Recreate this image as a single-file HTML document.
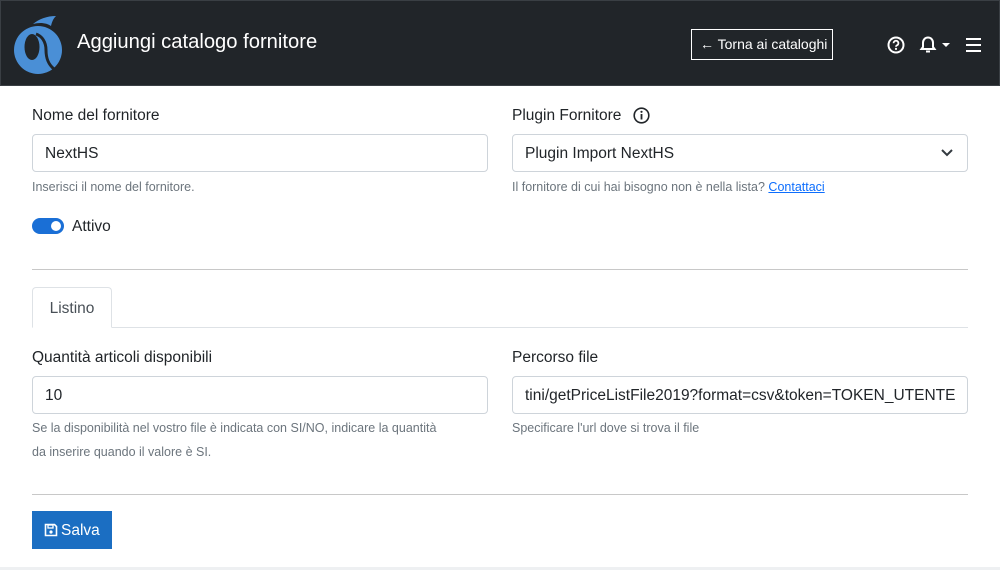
<!DOCTYPE html>
<html><head><meta charset="utf-8"><style>
*{box-sizing:border-box;margin:0;padding:0}
body{width:1000px;height:570px;background:#fff;font-family:"Liberation Sans",sans-serif;color:#212529;position:relative;overflow:hidden}
.hdr{position:absolute;left:0;top:0;width:1000px;height:86px;background:#212529;border:1px solid #3a3f44}
.title{position:absolute;left:76px;top:30px;color:#fff;font-size:20.2px}
.back{position:absolute;left:690px;top:28px;width:142px;height:31px;border:1px solid #fff;color:#fff;font-size:14px;line-height:29px;padding-left:8px}
.abs{position:absolute}
.lbl{position:absolute;font-size:15.5px}
.inp{position:absolute;height:38px;border:1px solid #ced4da;border-radius:4px;font-size:15.5px;line-height:38px;padding-left:12px;white-space:nowrap;overflow:hidden}
.help{position:absolute;font-size:12.5px;color:#6c757d;line-height:24px;white-space:nowrap}
.hr{position:absolute;left:32px;width:936px;height:1px;background:#c8c8c8}
</style></head><body>
<div class="hdr">
<svg class="abs" style="left:11px;top:11px" width="54" height="64" viewBox="0 0 54 64">
<circle cx="26" cy="38" r="24" fill="#4a8fd6"/>
<ellipse cx="20" cy="35" rx="7.5" ry="13" fill="#212529"/>
<path d="M24 22c6 2 10 8 10 16 0 8 2 14 8 19" fill="none" stroke="#212529" stroke-width="3"/>
<path d="M21 12c6-5 14-8 23-8-3 3-4 6-5 10-4-3-11-4-18-2z" fill="#4a8fd6"/>
</svg>
<div class="title">Aggiungi catalogo fornitore</div>
<div class="back">← Torna ai cataloghi</div>
<svg class="abs" style="left:886px;top:35px" width="18" height="18" viewBox="0 0 18 18"><circle cx="9" cy="9" r="7.5" fill="none" stroke="#fff" stroke-width="2"/><path d="M6.6 7.2a2.4 2.4 0 1 1 3.2 2.2c-.6.3-.8.7-.8 1.3" fill="none" stroke="#fff" stroke-width="1.8"/><circle cx="9" cy="12.9" r="1.1" fill="#fff"/></svg>
<svg class="abs" style="left:918px;top:34px" width="18" height="20" viewBox="0 0 18 20"><path d="M9 2.5c-3 0-5 2.3-5 5.3v4.2L2.5 14h13L14 12V7.8c0-3-2-5.3-5-5.3z" fill="none" stroke="#fff" stroke-width="2"/><path d="M7 16.5h4" stroke="#fff" stroke-width="2"/></svg>
<div class="abs" style="left:941px;top:42px;border-left:4px solid transparent;border-right:4px solid transparent;border-top:4px solid #fff"></div>
<div class="abs" style="left:965px;top:37px;width:15px;height:2px;background:#fff;box-shadow:0 6px 0 #fff,0 12px 0 #fff"></div>
</div>

<div class="lbl" style="left:32px;top:107px">Nome del fornitore</div>
<div class="inp" style="left:32px;top:134px;width:456px">NextHS</div>
<div class="help" style="left:32px;top:175px">Inserisci il nome del fornitore.</div>
<div class="abs" style="left:32px;top:218px;width:32px;height:16px;border-radius:8px;background:#1a6fd6"><div class="abs" style="left:19px;top:3px;width:10px;height:10px;border-radius:50%;background:#fff"></div></div>
<div class="lbl" style="left:72px;top:218px">Attivo</div>

<div class="lbl" style="left:512px;top:107px">Plugin Fornitore</div>
<svg class="abs" style="left:633px;top:107px" width="17" height="17" viewBox="0 0 17 17"><circle cx="8.5" cy="8.5" r="7.3" fill="none" stroke="#212529" stroke-width="1.6"/><rect x="7.6" y="7" width="1.8" height="5.5" fill="#212529"/><circle cx="8.5" cy="4.8" r="1.1" fill="#212529"/></svg>
<div class="inp" style="left:512px;top:134px;width:456px">Plugin Import NextHS</div>
<svg class="abs" style="left:940px;top:148px" width="14" height="10" viewBox="0 0 14 10"><path d="M2 2l5 5 5-5" fill="none" stroke="#343a40" stroke-width="2"/></svg>
<div class="help" style="left:512px;top:175px">Il fornitore di cui hai bisogno non è nella lista? <span style="color:#0d6efd;text-decoration:underline">Contattaci</span></div>

<div class="hr" style="top:269px"></div>
<div class="abs" style="left:32px;top:287px;width:80px;height:41px;border:1px solid #dee2e6;border-bottom:1px solid #fff;border-radius:4px 4px 0 0;background:#fff;z-index:2;font-size:15.5px;color:#495057;line-height:42px;text-align:center">Listino</div>
<div class="abs" style="left:32px;top:327px;width:936px;height:1px;background:#dee2e6"></div>

<div class="lbl" style="left:32px;top:349px">Quantità articoli disponibili</div>
<div class="inp" style="left:32px;top:376px;width:456px">10</div>
<div class="help" style="left:32px;top:416px">Se la disponibilità nel vostro file è indicata con SI/NO, indicare la quantità<br>da inserire quando il valore è SI.</div>
<div class="lbl" style="left:512px;top:349px">Percorso file</div>
<div class="inp" style="left:512px;top:376px;width:456px">tini/getPriceListFile2019?format=csv&amp;token=TOKEN_UTENTE</div>
<div class="help" style="left:512px;top:416px">Specificare l'url dove si trova il file</div>

<div class="hr" style="top:494px"></div>
<div class="abs" style="left:32px;top:511px;width:80px;height:38px;background:#1b6ec2;color:#fff;font-size:15.5px;line-height:40px;padding-left:12px">
<svg style="vertical-align:-2px;margin-right:3px" width="14" height="14" viewBox="0 0 14 14"><path d="M1.5 1.5h9l2 2v9h-11z" fill="none" stroke="#fff" stroke-width="1.6"/><rect x="4" y="2" width="5" height="3" fill="none" stroke="#fff" stroke-width="1.3"/><circle cx="7" cy="9" r="1.6" fill="#fff"/></svg>Salva</div>
<div class="abs" style="left:0;top:567px;width:1000px;height:3px;background:#eef0f2"></div>
</body></html>
